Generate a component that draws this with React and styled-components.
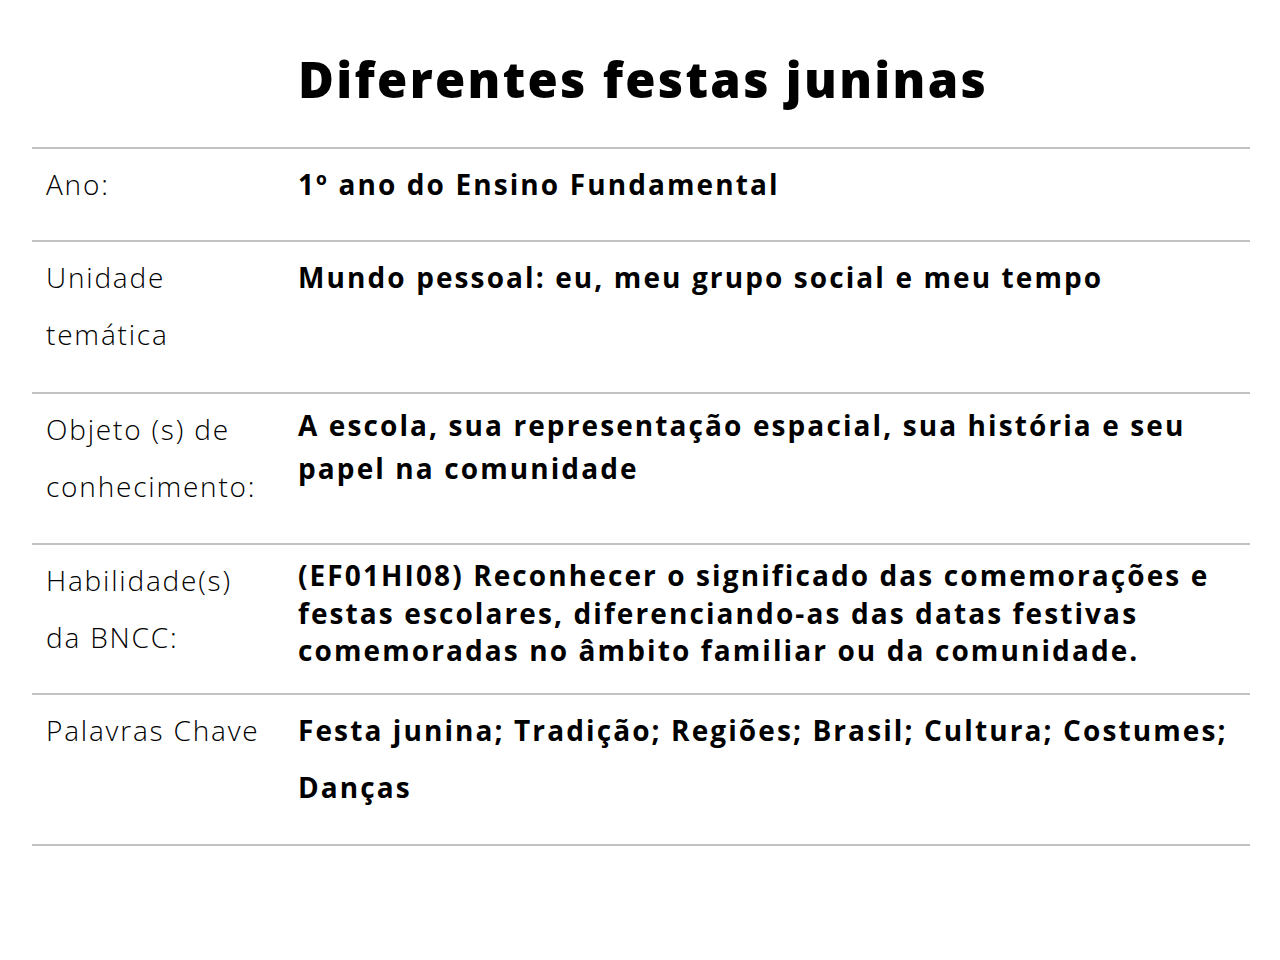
import React from "react";
import styled, { createGlobalStyle } from "styled-components";

const GlobalStyle = createGlobalStyle`
  body {
    margin: 0;
    background: #ffffff;
    font-family: "Open Sans", "Liberation Sans", sans-serif;
    color: #000000;
  }
`;

const rows = [
  { label: ["Ano:"], value: "1º ano do Ensino Fundamental", lh: 57, top: 7, bottom: 27 },
  {
    label: ["Unidade", "temática"],
    value: "Mundo pessoal: eu, meu grupo social e meu tempo",
    lh: 57,
    top: 7,
    bottom: 29,
  },
  {
    label: ["Objeto (s) de", "conhecimento:"],
    value: "A escola, sua representação espacial, sua história e seu papel na comunidade",
    lh: 43,
    top: 10,
    bottom: 28,
  },
  {
    label: ["Habilidade(s)", "da BNCC:"],
    value:
      "(EF01HI08) Reconhecer o significado das comemorações e festas escolares, diferenciando-as das datas festivas comemoradas no âmbito familiar ou da comunidade.",
    lh: 37.5,
    top: 12,
    bottom: 23.5,
  },
  {
    label: ["Palavras Chave"],
    value: "Festa junina; Tradição; Regiões; Brasil; Cultura; Costumes; Danças",
    lh: 57,
    top: 7,
    bottom: 28,
  },
];

export default function App() {
  return (
    <Page>
      <GlobalStyle />
      <Title>Diferentes festas juninas</Title>
      <Table>
        {rows.map((r, i) => (
          <Row key={i} $bottom={r.bottom}>
            <Label>
              {r.label.map((l, j) => (
                <div key={j}>{l}</div>
              ))}
            </Label>
            <Value $lh={r.lh} $top={r.top}>
              {r.value}
            </Value>
          </Row>
        ))}
      </Table>
    </Page>
  );
}

const Page = styled.div`
  width: 1280px;
  height: 960px;
  box-sizing: border-box;
  padding-top: 46px;
`;

const Title = styled.h1`
  margin: 0 0 0 298px;
  font-size: 49px;
  font-weight: 800;
  line-height: 67px;
  letter-spacing: 2.3px;
  height: 101px;
`;

const Table = styled.div`
  margin: 0 30px 0 32px;
  border-top: 2px solid #c2c2c2;
`;

const Row = styled.div`
  display: grid;
  grid-template-columns: 266px 1fr;
  align-items: start;
  border-bottom: 2px solid #c2c2c2;
  padding-bottom: ${(p) => p.$bottom}px;
`;

const Label = styled.div`
  padding: 7px 0 0 14px;
  font-size: 28px;
  font-weight: 300;
  line-height: 57px;
  letter-spacing: 1.8px;
`;

const Value = styled.div`
  padding: ${(p) => p.$top}px 14px 0 0;
  font-size: 28px;
  font-weight: 700;
  line-height: ${(p) => p.$lh}px;
  letter-spacing: 2.1px;
`;
